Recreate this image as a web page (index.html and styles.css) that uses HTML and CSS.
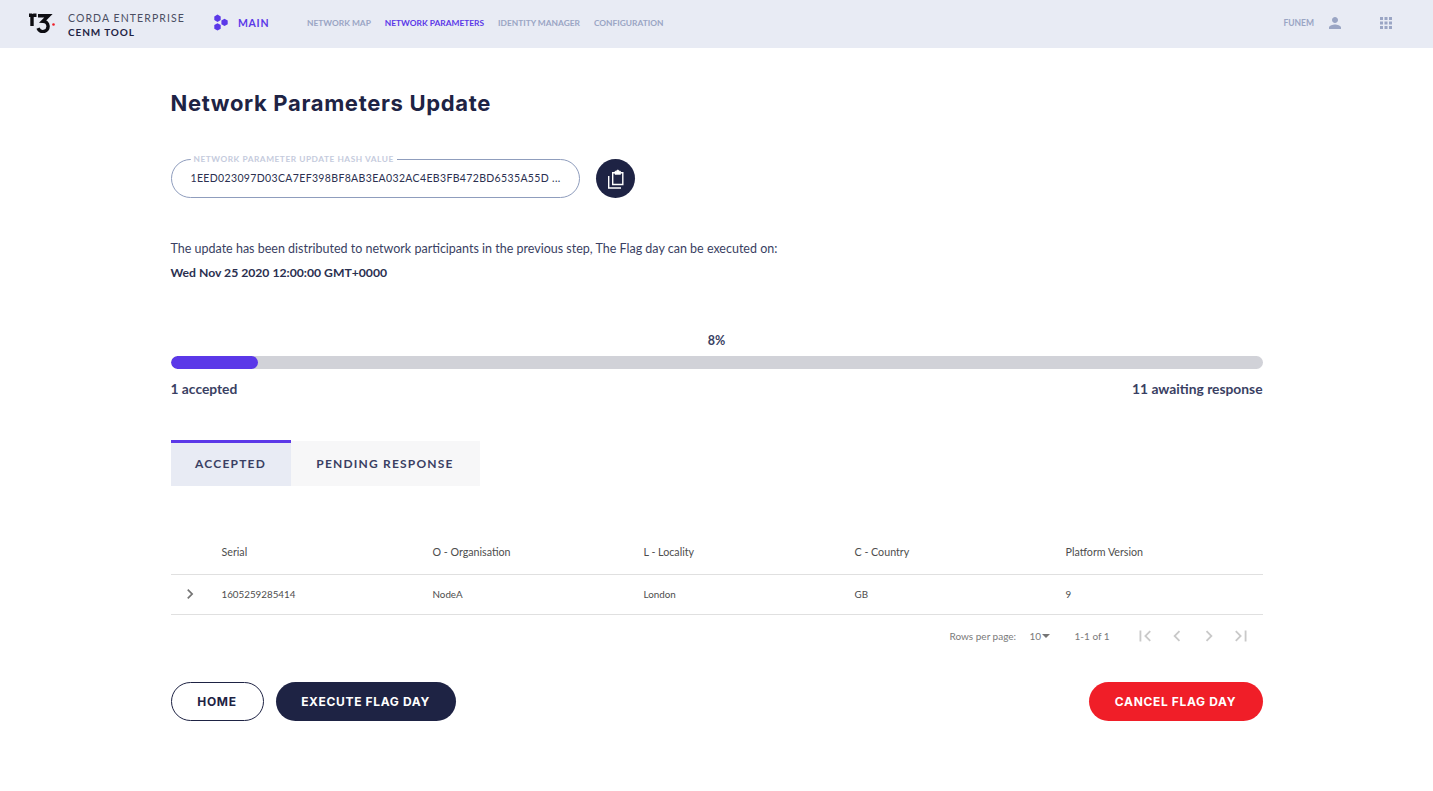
FILE: index.html
```html
<!DOCTYPE html>
<html lang="en">
<head>
<meta charset="UTF-8">
<title>Network Parameters Update</title>
<link rel="stylesheet" href="styles.css">
</head>
<body>
<header class="topbar">
  <svg class="logo" width="26" height="20" viewBox="0 0 26 20">
    <path d="M0 2.300H3M3 13V4.200a2 2 0 0 1 2-2H7.500" fill="none" stroke="#0d0d12" stroke-width="3.400"/>
    <path d="M9 2.700H19.500L14 8.200a5.200 5.200 0 1 1-5 7" fill="none" stroke="#0d0d12" stroke-width="3.400"/>
    <circle cx="24.500" cy="11.500" r="1.300" fill="#ef1d27"/>
  </svg>
  <div class="product">
    <span class="product-name">CORDA ENTERPRISE</span>
    <span class="product-tool">CENM TOOL</span>
  </div>
  <a class="section-link" href="#">
    <svg width="18" height="18" viewBox="0 0 18 18" fill="#5b38e8">
      <path d="M4.500.6l3.200 1.900v3.600L4.500 8 1.300 6.100V2.500z"/>
      <path d="M11.500 4.800l3.200 1.800v3.700l-3.200 1.800-3.100-1.800V6.600z"/>
      <path d="M4.500 9.300l3.200 1.800v3.700l-3.200 1.800-3.200-1.800v-3.700z"/>
    </svg>
    MAIN
  </a>
  <nav class="nav">
    <a href="#">NETWORK MAP</a>
    <a href="#" class="active">NETWORK PARAMETERS</a>
    <a href="#">IDENTITY MANAGER</a>
    <a href="#">CONFIGURATION</a>
  </nav>
  <div class="user">
    <span>FUNEM</span>
    <svg width="18" height="18" viewBox="0 0 24 24" fill="#9aa5c4"><path d="M12 12c2.210 0 4-1.790 4-4s-1.790-4-4-4-4 1.790-4 4 1.790 4 4 4zm0 2c-2.670 0-8 1.340-8 4v2h16v-2c0-2.660-5.330-4-8-4z"/></svg>
    <svg class="apps" width="18" height="18" viewBox="0 0 24 24" fill="#9aa5c4"><path d="M4 8h4V4H4v4zm6 12h4v-4h-4v4zm-6 0h4v-4H4v4zm0-6h4v-4H4v4zm6 0h4v-4h-4v4zm6-10v4h4V4h-4zm-6 4h4V4h-4v4zm6 6h4v-4h-4v4zm0 6h4v-4h-4v4z"/></svg>
  </div>
</header>

<main class="page">
  <h1>Network Parameters Update</h1>

  <div class="hash-row">
    <fieldset class="hash-field">
      <legend>NETWORK PARAMETER UPDATE HASH VALUE</legend>
      <span class="hash-value">1EED023097D03CA7EF398BF8AB3EA032AC4EB3FB472BD6535A55D ...</span>
    </fieldset>
    <button class="copy-btn" type="button" aria-label="Copy">
      <svg width="20" height="20" viewBox="0 0 20 20" fill="none" stroke="#fff" stroke-width="1.400">
        <path d="M3.700 7v12H16"/>
        <path d="M10 3.700H7.700v11.800h10.100V3.700h-2.300"/>
        <path d="M10 2.300h1.600a1.200 1.200 0 0 1 2.400 0h1.500v3H10z" fill="#fff" stroke-width=".8"/>
      </svg>
    </button>
  </div>

  <p class="notice">The update has been distributed to network participants in the previous step, The Flag day can be executed on:</p>
  <p class="flag-date">Wed Nov 25 2020 12:00:00 GMT+0000</p>

  <section class="progress">
    <div class="progress-pct">8%</div>
    <div class="progress-track"><div class="progress-fill" style="width: 8%"></div></div>
    <div class="progress-labels">
      <span>1 accepted</span>
      <span>11 awaiting response</span>
    </div>
  </section>

  <div class="tabs">
    <button class="tab active" type="button">ACCEPTED</button>
    <button class="tab" type="button">PENDING RESPONSE</button>
  </div>

  <div class="table">
    <div class="table-row table-head">
      <span></span>
      <span>Serial</span>
      <span>O - Organisation</span>
      <span>L - Locality</span>
      <span>C - Country</span>
      <span>Platform Version</span>
    </div>
    <div class="table-row table-body">
      <span class="expander">
        <svg width="20" height="20" viewBox="0 0 24 24" fill="#757575"><path d="M10 6L8.590 7.410 13.170 12l-4.580 4.590L10 18l6-6z"/></svg>
      </span>
      <span>1605259285414</span>
      <span>NodeA</span>
      <span>London</span>
      <span>GB</span>
      <span>9</span>
    </div>
  </div>

  <div class="pager">
    <span class="pager-label">Rows per page:</span>
    <span class="pager-size">10<i class="caret"></i></span>
    <span class="pager-count">1-1 of 1</span>
    <span class="pager-icons">
      <svg viewBox="0 0 24 24"><path d="M18.410 16.590L13.820 12l4.590-4.590L17 6l-6 6 6 6zM6 6h2v12H6z"/></svg>
      <svg viewBox="0 0 24 24"><path d="M15.410 7.410L14 6l-6 6 6 6 1.410-1.410L10.830 12z"/></svg>
      <svg viewBox="0 0 24 24"><path d="M10 6L8.590 7.410 13.170 12l-4.580 4.590L10 18l6-6z"/></svg>
      <svg viewBox="0 0 24 24"><path d="M5.590 7.410L10.180 12l-4.590 4.590L7 18l6-6-6-6zM16 6h2v12h-2z"/></svg>
    </span>
  </div>

  <div class="actions">
    <button class="btn btn-outline" type="button">HOME</button>
    <button class="btn btn-dark" type="button">EXECUTE FLAG DAY</button>
    <button class="btn btn-red" type="button">CANCEL FLAG DAY</button>
  </div>
</main>
</body>
</html>
```

FILE: styles.css
```css
* {box-sizing: border-box;}
body {margin: 0; background: #fff; color: #3a3f63; font-family: "Lato", "Open Sans", sans-serif; font-size: 14px;}
a {text-decoration: none; color: inherit;}
button {font-family: inherit; cursor: pointer;}

.topbar {display: flex; align-items: center; height: 48px; background: #e8ebf4; padding: 0 38px 3px 29px;}
.logo {flex: none;}
.product {display: flex; flex-direction: column; margin: 5px 0 0 13px; width: 145px; line-height: 14px;}
.product-name {font-size: 10.500px; letter-spacing: 1.080px; color: #4a4e62;}
.product-tool {font-size: 10px; letter-spacing: .9px; font-weight: 700; color: #1e2344;}
.section-link {display: flex; align-items: center; gap: 7px; width: 94px; font-size: 10.500px; font-weight: 700; letter-spacing: .7px; color: #5b38e8;}
.nav {display: flex; gap: 14px; font-size: 8.400px; font-weight: 700; color: #9aa5c4;}
.nav .active {color: #5b38e8;}
.user {display: flex; align-items: center; margin-left: auto; gap: 12px; font-size: 8.500px; font-weight: 700; color: #9aa5c4;}
.apps {margin-left: 21px;}

.page {width: 1092px; margin: 0 auto;}
h1 {margin: 0; padding-top: 40px; font-size: 22px; line-height: 30px; font-weight: 700; color: #1e2344; letter-spacing: .66px; font-family: "Inter", sans-serif;}

.hash-row {display: flex; gap: 16px; margin-top: 41px; align-items: flex-start;}
.hash-field {width: 409px; height: 44px; margin: -5px 0 0; padding: 0 0 0 19px; border: 1px solid #8f9dbd; border-radius: 20px; min-width: 0;}
.hash-field legend {padding: 0 3px; font-size: 8.300px; line-height: 10px; font-weight: 700; letter-spacing: .55px; color: #c5cbdd;}
.hash-value {display: block; margin-top: 6px; font-size: 10.500px; letter-spacing: .35px; line-height: 16px; white-space: nowrap; color: #2b3050;}
.copy-btn {display: flex; align-items: center; justify-content: center; width: 39px; height: 39px; padding: 0; border: 0; border-radius: 50%; background: #1e2344;}

.notice {margin: 43px 0 0; font-size: 12.500px; line-height: 16px;}
.flag-date {margin: 8px 0 0; font-size: 12.200px; line-height: 16px; font-weight: 700; color: #2b3050;}

.progress {margin-top: 52px;}
.progress-pct {text-align: center; font-size: 12.500px; font-weight: 700; line-height: 16px;}
.progress-track {height: 13px; margin-top: 7px; background: #d1d2d8; border-radius: 7px; overflow: hidden;}
.progress-fill {height: 100%; background: #5b38e8; border-radius: 7px;}
.progress-labels {display: flex; justify-content: space-between; margin-top: 12px; font-size: 13.800px; line-height: 16px; font-weight: 700;}

.tabs {display: flex; margin-top: 44px;}
.tab {height: 45px; width: 189px; padding: 0; border: 0; background: #f7f7f8; color: #3a3f63; font-size: 12px; font-weight: 700; letter-spacing: 1.200px;}
.tab.active {width: 120px; background: #e8ebf4; box-shadow: 0 -1px 0 #5b38e8, inset 0 2px 0 #5b38e8;}

.table {margin-top: 46px;}
.table-row {display: grid; grid-template-columns: 51px repeat(4, 211px) 1fr; align-items: center; border-bottom: 1px solid #e0e0e0; color: #4d4d4d;}
.table-head {height: 43px; padding-bottom: 4px; font-size: 10.700px;}
.table-body {height: 40px; padding-bottom: 2px; font-size: 9.800px;}
.expander {display: flex; padding-left: 9px;}

.pager {display: flex; align-items: center; height: 44px; padding: 0 0 2px 779px; font-size: 10px; color: #7a7a7a;}
.pager-label {width: 80px;}
.pager-size {display: flex; align-items: center; width: 45px;}
.caret {width: 0; height: 0; margin-left: 1px; border-left: 4px solid transparent; border-right: 4px solid transparent; border-top: 4px solid #757575;}
.pager-count {width: 59px;}
.pager-icons {display: flex; gap: 10px;}
.pager-icons svg {width: 22px; height: 22px; fill: #c9c9c9;}

.actions {display: flex; gap: 12px; margin-top: 23px;}
.btn {height: 39px; padding: 0; border-radius: 20px; font-family: "Inter", sans-serif; font-size: 12px; font-weight: 700; letter-spacing: .65px;}
.btn-outline {width: 93px; background: #fff; border: 1px solid #1e2344; color: #1e2344;}
.btn-dark {width: 180px; background: #1e2344; border: 0; color: #fff;}
.btn-red {width: 174px; margin-left: auto; background: #f01e28; border: 0; color: #fff;}
```
